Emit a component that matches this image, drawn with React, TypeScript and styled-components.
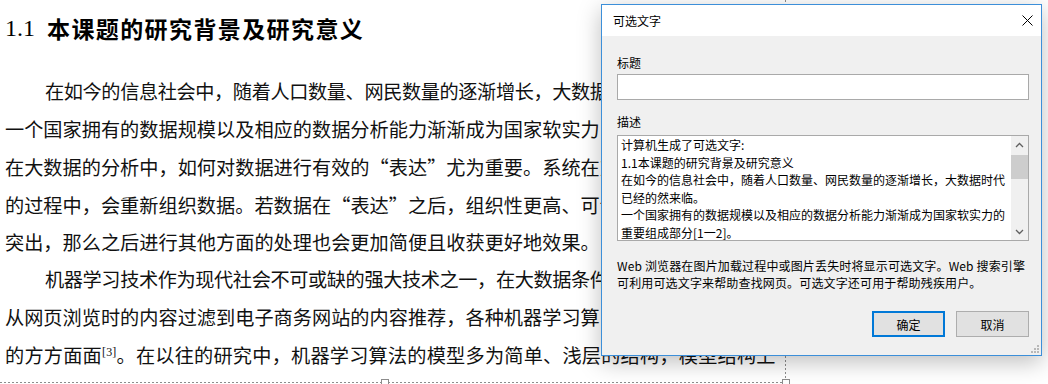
import styled, { createGlobalStyle } from 'styled-components';

const GlobalStyle = createGlobalStyle`
  html, body {
    margin: 0;
    padding: 0;
    background: #fff;
  }
  body {
    width: 1048px;
    height: 384px;
    overflow: hidden;
  }
`;

const Screen = styled.div`
  position: relative;
  width: 1048px;
  height: 384px;
  overflow: hidden;
  background: #fff;
`;

/* the selected picture in the document, with its dashed frame */
const ImageFrame = styled.div`
  position: relative;
  width: 786px;
  height: 383px;
  box-sizing: border-box;
  padding: 10px 0 0 5px;
  background:
    repeating-linear-gradient(to right, #8c8c8c 0 2px, transparent 2px 4px) left bottom / 100% 1px no-repeat,
    repeating-linear-gradient(to bottom, #8c8c8c 0 2px, transparent 2px 4px) right top / 1px 100% no-repeat;
  font-family: 'Liberation Serif', 'Noto Sans CJK SC', serif;
  color: #111;
`;

const Heading = styled.h1`
  margin: 0 0 28px;
  height: 36px;
  display: flex;
  align-items: center;
  font-size: 23px;
  font-weight: 700;
  letter-spacing: 1.4px;
  white-space: nowrap;
  color: #000;
`;

const HeadingNumber = styled.span`
  font-weight: 400;
  font-size: 24px;
  letter-spacing: 0;
  margin-right: 12px;
`;

// justified lines in the original end up with slightly different spacing
const Line = styled.div<{ $indent?: boolean; $track?: number }>`
  height: 37.7px;
  line-height: 37.7px;
  font-size: 19.2px;
  white-space: nowrap;
  letter-spacing: ${(p) => p.$track ?? 0}px;
  padding-left: ${(p) => (p.$indent ? '40px' : '0')};
`;

const Quote = styled.span`
  font-family: 'Noto Sans CJK SC', sans-serif;
`;

const Ref = styled.sup`
  font-size: 12px;
  line-height: 0;
  vertical-align: 7px;
`;

const Handle = styled.span<{ $x: number }>`
  position: absolute;
  left: ${(p) => p.$x}px;
  top: 379px;
  width: 6px;
  height: 6px;
  border: 1px solid #8c8c8c;
  background: #fff;
`;

const Dialog = styled.div`
  position: absolute;
  left: 601px;
  top: 4px;
  width: 441px;
  height: 352px;
  box-sizing: border-box;
  border: 1px solid #3c8fd9;
  background: #f0f0f0;
  box-shadow: 0 6px 22px rgba(0, 0, 0, 0.26);
  display: flex;
  flex-direction: column;
  font-family: 'Noto Sans CJK SC', 'Noto Sans', sans-serif;
  font-size: 12px;
  color: #000;
`;

const TitleBar = styled.div`
  height: 31px;
  background: #fff;
  display: flex;
  align-items: center;
  justify-content: space-between;
  padding-left: 11px;
`;

const CloseButton = styled.div`
  width: 28px;
  height: 31px;
  display: flex;
  align-items: center;
  justify-content: center;
`;

const Body = styled.div`
  flex: 1;
  display: flex;
  flex-direction: column;
  padding: 0 12px 0 15px;
`;

const Label = styled.div<{ $top: number }>`
  margin-top: ${(p) => p.$top}px;
  line-height: 17px;
`;

const TextInput = styled.div`
  margin-top: 3px;
  height: 26px;
  box-sizing: border-box;
  border: 1px solid #a9a9a9;
  background: #fff;
`;

const TextArea = styled.div`
  margin-top: 5px;
  height: 106px;
  box-sizing: border-box;
  border: 1px solid #a9a9a9;
  background: #fff;
  display: flex;
`;

const AreaText = styled.div`
  flex: 1;
  padding-left: 3px;
  overflow: hidden;
`;

const AreaLine = styled.div`
  line-height: 17.6px;
  white-space: nowrap;
`;

const ScrollBar = styled.div`
  width: 17px;
  display: flex;
  flex-direction: column;
  background: #f0f0f0;
`;

const ScrollArrow = styled.div`
  height: 17px;
  display: flex;
  align-items: center;
  justify-content: center;
`;

const ScrollThumb = styled.div`
  margin: 2px 0 0;
  height: 24px;
  background: #cdcdcd;
`;

const ScrollTrack = styled.div`
  flex: 1;
`;

const HelpText = styled.div`
  margin-top: 16px;
  line-height: 17px;
  white-space: nowrap;
  letter-spacing: 0.15px;
`;

const ButtonRow = styled.div`
  margin-top: 20px;
  display: flex;
  justify-content: flex-end;
  gap: 11px;
`;

const Button = styled.div<{ $primary?: boolean }>`
  width: 73px;
  height: 26px;
  box-sizing: border-box;
  display: flex;
  align-items: center;
  justify-content: center;
  background: #e1e1e1;
  border: ${(p) => (p.$primary ? '2px solid #0078d7' : '1px solid #adadad')};
`;

const Grip = styled.svg`
  position: absolute;
  right: 2px;
  bottom: 2px;
`;

function Chevron({ up }: { up?: boolean }) {
  return (
    <svg width="9" height="6" viewBox="0 0 9 6">
      <polyline
        points={up ? '1,5 4.5,1.5 8,5' : '1,1 4.5,4.5 8,1'}
        fill="none"
        stroke="#606060"
        strokeWidth="1.3"
      />
    </svg>
  );
}

export default function App() {
  return (
    <Screen>
      <GlobalStyle />
      <ImageFrame>
        <Heading>
          <HeadingNumber>1.1</HeadingNumber>本课题的研究背景及研究意义
        </Heading>
        <Line $indent $track={-0.4}>
          在如今的信息社会中，随着人口数量、网民数量的逐渐增长，大数据
        </Line>
        <Line>一个国家拥有的数据规模以及相应的数据分析能力渐渐成为国家软实力</Line>
        <Line>
          在大数据的分析中，如何对数据进行有效的<Quote>“</Quote>表达<Quote>”</Quote>尤为重要。系统在对
        </Line>
        <Line>
          的过程中，会重新组织数据。若数据在<Quote>“</Quote>表达<Quote>”</Quote>之后，组织性更高、可读
        </Line>
        <Line>突出，那么之后进行其他方面的处理也会更加简便且收获更好地效果。</Line>
        <Line $indent $track={-0.4}>
          机器学习技术作为现代社会不可或缺的强大技术之一，在大数据条件
        </Line>
        <Line>从网页浏览时的内容过滤到电子商务网站的内容推荐，各种机器学习算</Line>
        <Line $track={0.2}>
          的方方面面<Ref>[3]</Ref>。在以往的研究中，机器学习算法的模型多为简单、浅层的结构，模型结构上
        </Line>
        <Handle $x={381} />
        <Handle $x={782} />
      </ImageFrame>

      <Dialog>
        <TitleBar>
          <span>可选文字</span>
          <CloseButton>
            <svg width="11" height="11" viewBox="0 0 11 11">
              <path d="M0.5 0.5 L10.5 10.5 M10.5 0.5 L0.5 10.5" stroke="#000" strokeWidth="1" />
            </svg>
          </CloseButton>
        </TitleBar>
        <Body>
          <Label $top={18}>标题</Label>
          <TextInput />
          <Label $top={13}>描述</Label>
          <TextArea>
            <AreaText>
              <AreaLine>计算机生成了可选文字:</AreaLine>
              <AreaLine>1.1本课题的研究背景及研究意义</AreaLine>
              <AreaLine>在如今的信息社会中，随着人口数量、网民数量的逐渐增长，大数据时代</AreaLine>
              <AreaLine>已经的然来临。</AreaLine>
              <AreaLine>一个国家拥有的数据规模以及相应的数据分析能力渐渐成为国家软实力的</AreaLine>
              <AreaLine>重要组成部分[1一2]。</AreaLine>
            </AreaText>
            <ScrollBar>
              <ScrollArrow>
                <Chevron up />
              </ScrollArrow>
              <ScrollThumb />
              <ScrollTrack />
              <ScrollArrow>
                <Chevron />
              </ScrollArrow>
            </ScrollBar>
          </TextArea>
          <HelpText>
            Web 浏览器在图片加载过程中或图片丢失时将显示可选文字。Web 搜索引擎
            <br />
            可利用可选文字来帮助查找网页。可选文字还可用于帮助残疾用户。
          </HelpText>
          <ButtonRow>
            <Button $primary>确定</Button>
            <Button>取消</Button>
          </ButtonRow>
        </Body>
        <Grip width="8" height="8" viewBox="0 0 8 8">
          <rect x="6" y="0" width="2" height="2" fill="#b8b8b8" />
          <rect x="3" y="3" width="2" height="2" fill="#b8b8b8" />
          <rect x="6" y="3" width="2" height="2" fill="#b8b8b8" />
          <rect x="0" y="6" width="2" height="2" fill="#b8b8b8" />
          <rect x="3" y="6" width="2" height="2" fill="#b8b8b8" />
          <rect x="6" y="6" width="2" height="2" fill="#b8b8b8" />
        </Grip>
      </Dialog>
    </Screen>
  );
}
